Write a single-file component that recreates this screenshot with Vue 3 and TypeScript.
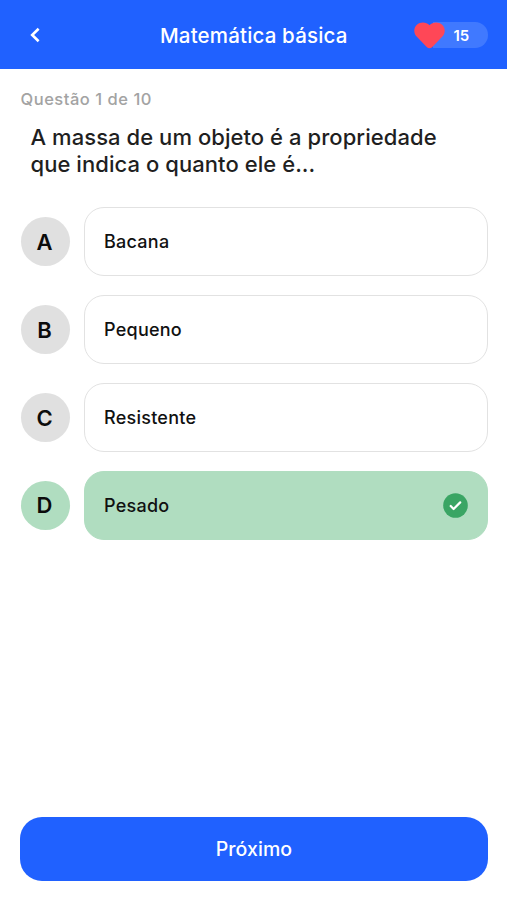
<script setup lang="ts">
import { ref } from 'vue'

interface Option {
  letter: string
  text: string
}

const options: Option[] = [
  { letter: 'A', text: 'Bacana' },
  { letter: 'B', text: 'Pequeno' },
  { letter: 'C', text: 'Resistente' },
  { letter: 'D', text: 'Pesado' },
]

const selected = ref('D')
const lives = ref(15)
</script>

<template>
  <div class="screen">
    <header class="header">
      <button class="back" aria-label="Voltar">
        <svg width="12" height="16" viewBox="0 0 12 16" fill="none">
          <path d="M9.600 1.800 3.200 8l6.400 6.200" stroke="#fff" stroke-width="2.600" />
        </svg>
      </button>
      <h1 class="title">Matemática básica</h1>
      <div class="lives">
        <svg class="heart" width="31" height="27" viewBox="0 0 31 27">
          <path
            d="M15.500 3.300C12.300-.300 6.300-.400 2.900 2.800C-.500 6-.600 11 2.600 14.500L12.700 25C14.300 26.600 16.700 26.600 18.300 25L28.400 14.500C31.600 11 31.500 6 28.100 2.800C24.700-.400 18.700-.300 15.500 3.300Z"
            fill="#ff4757"
          />
        </svg>
        <span class="count">{{ lives }}</span>
      </div>
    </header>

    <main class="content">
      <p class="progress">Questão 1 de 10</p>
      <h2 class="question">A massa de um objeto é a propriedade que indica o quanto ele é...</h2>
      <ul class="options">
        <li
          v-for="option in options"
          :key="option.letter"
          class="option"
          :class="{ correct: option.letter === selected }"
          @click="selected = option.letter"
        >
          <span class="letter">{{ option.letter }}</span>
          <div class="answer">
            <span class="answer-text">{{ option.text }}</span>
            <svg v-if="option.letter === selected" width="25" height="25" viewBox="0 0 25 25" fill="none">
              <circle cx="12.500" cy="12.500" r="12.300" fill="#3aa564" />
              <path
                d="m7.700 13 2.900 3 6.600-6.600"
                stroke="#fff"
                stroke-width="2.200"
                stroke-linecap="round"
                stroke-linejoin="round"
              />
            </svg>
          </div>
        </li>
      </ul>
    </main>

    <footer class="footer">
      <button class="next">Próximo</button>
    </footer>
  </div>
</template>

<style>
body {
  margin: 0;
  background: #fff;
}
</style>

<style scoped>
.screen {
  box-sizing: border-box;
  display: flex;
  flex-direction: column;
  height: 900px;
  background: #fff;
  color: #1f1f1f;
  font-family: Inter, 'Liberation Sans', sans-serif;
}

button {
  padding: 0;
  border: 0;
  font: inherit;
  cursor: pointer;
}

.header {
  box-sizing: border-box;
  display: grid;
  grid-template-columns: 74px 1fr 74px;
  align-items: center;
  height: 69px;
  padding: 1px 19.500px 0 20px;
  background: #2061ff;
  color: #fff;
}

.back {
  display: flex;
  align-items: center;
  height: 40px;
  padding-left: 9px;
  background: none;
}

.title {
  margin: 0;
  padding-top: 2px;
  font-size: 20.500px;
  line-height: 26px;
  font-weight: 500;
  letter-spacing: 0.170px;
  text-align: center;
}

.lives {
  display: flex;
  align-items: center;
  height: 26px;
  border-radius: 0 13px 13px 0;
  background: linear-gradient(90deg, transparent 19px, #4079ff 19px);
}

.heart {
  flex: none;
}

.count {
  margin-left: 9px;
  font-size: 15px;
  font-weight: 600;
}

.content {
  flex: 1;
  padding: 0 19.500px 0 20.500px;
}

.progress {
  margin: 19px 0 0;
  font-size: 16.500px;
  line-height: 22px;
  font-weight: 500;
  letter-spacing: 0.520px;
  color: #a3a3a3;
}

.question {
  margin: 14px 9px 0 10px;
  font-size: 22px;
  line-height: 27px;
  font-weight: 500;
  letter-spacing: 0.060px;
}

.options {
  display: flex;
  flex-direction: column;
  gap: 19.700px;
  margin: 29.400px 0 0;
  padding: 0;
  list-style: none;
}

.option {
  display: flex;
  align-items: center;
  gap: 14.500px;
  cursor: pointer;
}

.letter {
  box-sizing: border-box;
  display: flex;
  flex: none;
  align-items: center;
  justify-content: center;
  width: 49px;
  height: 49px;
  padding-right: 1px;
  border-radius: 50%;
  background: #e0e0e0;
  color: #0c0c0c;
  font-size: 22px;
  font-weight: 600;
}

.answer {
  box-sizing: border-box;
  display: flex;
  flex: 1;
  align-items: center;
  justify-content: space-between;
  height: 68.300px;
  padding: 0 19px;
  border: 1px solid #e2e2e2;
  border-radius: 20px;
  color: #111;
  font-size: 18px;
  font-weight: 500;
  letter-spacing: 0.250px;
}

.correct .letter {
  background: #b0ddc0;
}

.correct .answer {
  border-color: #b0ddc0;
  background: #b0ddc0;
}

.footer {
  padding: 0 19.500px 19.500px 20.400px;
}

.next {
  display: block;
  width: 100%;
  height: 63.500px;
  border-radius: 22px;
  background: #2061ff;
  color: #fff;
  font-size: 19.500px;
  font-weight: 500;
  letter-spacing: 0.100px;
}
</style>
